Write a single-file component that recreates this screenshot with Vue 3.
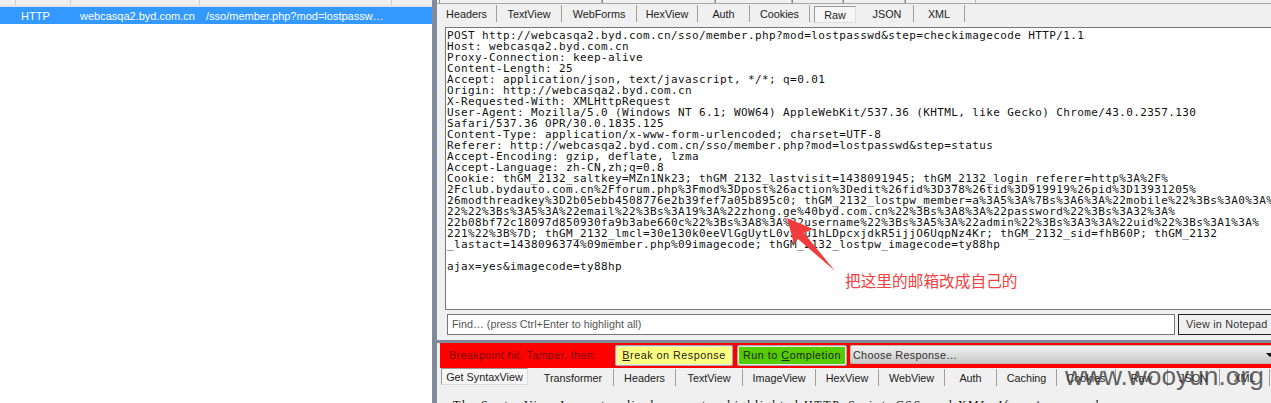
<script setup>
const topTabs = [
  { label: 'Headers', w: 60 }, { label: 'TextView', w: 65 }, { label: 'WebForms', w: 75 },
  { label: 'HexView', w: 61 }, { label: 'Auth', w: 52 }, { label: 'Cookies', w: 60 },
  { label: 'Raw', w: 51, active: true }, { label: 'JSON', w: 53 }, { label: 'XML', w: 51 }
]
const bottomTabs = [
  { label: 'Transformer', w: 81 }, { label: 'Headers', w: 62 }, { label: 'TextView', w: 67 },
  { label: 'ImageView', w: 73 }, { label: 'HexView', w: 63 }, { label: 'WebView', w: 66 },
  { label: 'Auth', w: 52 }, { label: 'Caching', w: 60 }, { label: 'Cookies', w: 59 },
  { label: 'Raw', w: 52 }, { label: 'JSON', w: 52 }, { label: 'XML', w: 50 }
]
const stripCells = [163, 113, 77, 51, 62, 71]
const raw = `POST http://webcasqa2.byd.com.cn/sso/member.php?mod=lostpasswd&step=checkimagecode HTTP/1.1
Host: webcasqa2.byd.com.cn
Proxy-Connection: keep-alive
Content-Length: 25
Accept: application/json, text/javascript, */*; q=0.01
Origin: http://webcasqa2.byd.com.cn
X-Requested-With: XMLHttpRequest
User-Agent: Mozilla/5.0 (Windows NT 6.1; WOW64) AppleWebKit/537.36 (KHTML, like Gecko) Chrome/43.0.2357.130
Safari/537.36 OPR/30.0.1835.125
Content-Type: application/x-www-form-urlencoded; charset=UTF-8
Referer: http://webcasqa2.byd.com.cn/sso/member.php?mod=lostpasswd&step=status
Accept-Encoding: gzip, deflate, lzma
Accept-Language: zh-CN,zh;q=0.8
Cookie: thGM_2132_saltkey=MZn1Nk23; thGM_2132_lastvisit=1438091945; thGM_2132_login_referer=http%3A%2F%
2Fclub.bydauto.com.cn%2Fforum.php%3Fmod%3Dpost%26action%3Dedit%26fid%3D378%26tid%3D919919%26pid%3D13931205%
26modthreadkey%3D2b05ebb4508776e2b39fef7a05b895c0; thGM_2132_lostpw_member=a%3A5%3A%7Bs%3A6%3A%22mobile%22%3Bs%3A0%3A%
22%22%3Bs%3A5%3A%22email%22%3Bs%3A19%3A%22zhong.ge%40byd.com.cn%22%3Bs%3A8%3A%22password%22%3Bs%3A32%3A%
22b08bf72c18097d850930fa9b3abe660c%22%3Bs%3A8%3A%22username%22%3Bs%3A5%3A%22admin%22%3Bs%3A3%3A%22uid%22%3Bs%3A1%3A%
221%22%3B%7D; thGM_2132_lmcl=30e130k0eeVlGgUytL0v2Ju1hLDpcxjdkR5ijjO6UqpNz4Kr; thGM_2132_sid=fhB60P; thGM_2132
_lastact=1438096374%09member.php%09imagecode; thGM_2132_lostpw_imagecode=ty88hp

ajax=yes&imagecode=ty88hp`
</script>

<template>
  <div class="page">
    <section class="sessions">
      <div class="col-head">
        <i style="width:16px"></i><i style="width:55px"></i><i style="width:129px"></i><i style="width:192px"></i>
      </div>
      <div class="row">
        <span class="c-proto">HTTP</span>
        <span class="c-host">webcasqa2.byd.com.cn</span>
        <span class="c-url">/sso/member.php?mod=lostpassw…</span>
      </div>
    </section>

    <div class="splitter"></div>

    <section class="inspector">
      <div class="strip">
        <i v-for="(w, n) in stripCells" :key="n" :style="{ width: w + 'px' }"></i>
      </div>
      <nav class="tabs top">
        <span v-for="t in topTabs" :key="t.label" class="tab" :class="{ active: t.active }" :style="{ width: t.w + 'px' }">{{ t.label }}</span>
      </nav>
      <pre class="raw">{{ raw }}</pre>
      <div class="find-row">
        <div class="find">Find… (press Ctrl+Enter to highlight all)</div>
        <div class="notepad">View in Notepad</div>
      </div>
      <div class="rule"></div>
      <div class="breakbar">
        <span class="hit">Breakpoint hit. Tamper, then:</span>
        <button class="btn yellow"><u>B</u>reak on Response</button>
        <button class="btn green">Run to <u>C</u>ompletion</button>
        <div class="choose"><span>Choose Response…</span><b></b></div>
      </div>
      <nav class="tabs bottom">
        <span class="tab active first">Get SyntaxView</span>
        <span v-for="t in bottomTabs" :key="t.label" class="tab" :style="{ width: t.w + 'px' }">{{ t.label }}</span>
      </nav>
      <p class="syntax">The SyntaxView Inspector displays syntax-highlighted HTTP, Script, CSS, and XML. If you're on a slow</p>
    </section>

    <svg class="arrow" width="60" height="60" viewBox="0 0 60 60">
      <polygon points="2,1 28,12 19,16 50,54 13,22 9,27" fill="#f03c3c" />
    </svg>
    <div class="note">把这里的邮箱改成自己的</div>
    <div class="mark">www.wooyun.org</div>
  </div>
</template>

<style>
html, body { margin: 0; background: #fff; overflow: hidden; }
</style>

<style scoped>
.page {
  position: relative;
  display: flex;
  width: 1271px;
  height: 403px;
  overflow: hidden;
  font-family: "Liberation Sans", sans-serif;
  font-size: 10.8px;
  color: #222;
}
.sessions { width: 432px; flex: none; background: #fff; }
.col-head { display: flex; height: 7px; box-sizing: border-box; background: #f0f0f0; border-bottom: 2px solid #e4e4e4; }
.col-head i { border-right: 1px solid #d0d0d0; box-sizing: border-box; }
.row {
  display: flex;
  align-items: center;
  height: 17px;
  background: #3399ff;
  color: #fff;
  font-size: 11px;
}
.c-proto { width: 80px; padding-left: 21px; box-sizing: border-box; }
.c-host { width: 126px; }
.c-url { flex: 1; white-space: nowrap; }
.splitter { width: 5px; flex: none; background: #808a9a; }
.inspector { flex: 1; min-width: 0; background: #f0f0f0; display: flex; flex-direction: column; overflow: hidden; }
.strip {
  display: flex;
  height: 4px;
  flex: none;
  padding-left: 2px;
  border-bottom: 1px solid #a8a8a8;
  box-sizing: border-box;
}
.strip i { box-sizing: border-box; border-left: 1px solid #888; border-right: 1px solid #bbb; }
.tabs { display: flex; flex: none; }
.tabs.top { height: 20px; }
.tab {
  box-sizing: border-box;
  display: flex;
  align-items: center;
  justify-content: center;
  border-right: 1px solid #a0a0a0;
  white-space: nowrap;
  flex: none;
  margin: 1px 0 2px;
}
.tabs.bottom .tab { margin: 1px 0 0; }
.tab.active {
  background: #f6f6f6;
  border: 1px solid #999;
  border-bottom-color: #ddd;
  border-right-color: #ddd;
  margin: 2px 5px 1px 4px;
  width: 42px !important;
}
.raw {
  margin: 3px 0 0 8px;
  height: 283px;
  box-sizing: border-box;
  flex: none;
  background: #fff;
  border: 1px solid #777;
  border-right: none;
  padding: 2px 0 0 1px;
  overflow: hidden;
  font-family: "DejaVu Sans Mono", monospace;
  font-size: 11px;
  letter-spacing: 0.38px;
  line-height: 11px;
  color: #111;
  white-space: pre;
}
.find-row { display: flex; margin: 4px 0 0 10px; height: 21px; gap: 3px; flex: none; }
.find {
  flex: 1;
  box-sizing: border-box;
  background: #fff;
  border: 1px solid #777;
  padding-left: 4px;
  line-height: 19px;
  color: #555;
}
.notepad {
  width: 93px;
  flex: none;
  box-sizing: border-box;
  border: 1px solid #222;
  border-right: none;
  line-height: 19px;
  padding-left: 7px;
  white-space: nowrap;
  color: #333;
  letter-spacing: 0.2px;
}
.rule { height: 3px; margin-top: 5px; background: #808a9a; flex: none; }
.breakbar {
  height: 25px;
  flex: none;
  display: flex;
  align-items: flex-start;
  background: #ff0000;
  margin-left: 3px;
  box-sizing: border-box;
  padding-top: 2px;
}
.hit { width: 175px; flex: none; padding-left: 9px; box-sizing: border-box; color: #7a0000; line-height: 20px; white-space: nowrap; letter-spacing: 0.35px; }
.btn {
  box-sizing: border-box;
  height: 21px;
  padding: 0 0 1px;
  border: 1px solid #aaa;
  outline: 1px solid #e8e8e8;
  outline-offset: -2px;
  border-radius: 2px;
  font: inherit;
  color: #222;
  letter-spacing: 0.5px;
  flex: none;
}
.yellow { width: 118px; background: #ffff80; }
.green { width: 110px; background: #55cc00; margin-left: 4px; }
.choose {
  flex: 1;
  margin-left: 3px;
  height: 19px;
  box-sizing: border-box;
  display: flex;
  align-items: center;
  justify-content: space-between;
  padding: 0 0 0 2px;
  border: 1px solid #bbb;
  border-right: none;
  border-radius: 2px 0 0 2px;
  background: linear-gradient(#f2f2f2, #c8c8c8);
  color: #333;
  letter-spacing: 0.3px;
}
.choose b { width: 0; height: 0; border: 4px solid transparent; border-top: 4px solid #111; border-bottom: none; margin-right: -3px; }
.tabs.bottom { height: 18px; margin-left: 4px; }
.tabs.bottom .tab.first {
  width: 87px !important;
  margin: 0 5px 1px 0;
  background: #f6f6f6;
  border: 1px solid #999;
  border-bottom-color: #ddd;
  border-right-color: #ddd;
}
.syntax {
  margin: 12px 0 0 16px;
  flex: none;
  font-family: "Liberation Serif", serif;
  font-size: 12px;
  letter-spacing: 1.6px;
  white-space: nowrap;
  color: #111;
}
.arrow { position: absolute; left: 785px; top: 217px; }
.note {
  position: absolute;
  left: 845px;
  top: 271px;
  font-family: "Noto Sans CJK SC", sans-serif;
  font-size: 15.7px;
  line-height: 20px;
  color: #f04040;
  white-space: nowrap;
}
.mark {
  position: absolute;
  left: 1065px;
  top: 361px;
  font-family: "Liberation Sans", sans-serif;
  font-size: 26.3px;
  line-height: 30px;
  color: rgba(60, 60, 60, 0.8);
  white-space: nowrap;
}
</style>
